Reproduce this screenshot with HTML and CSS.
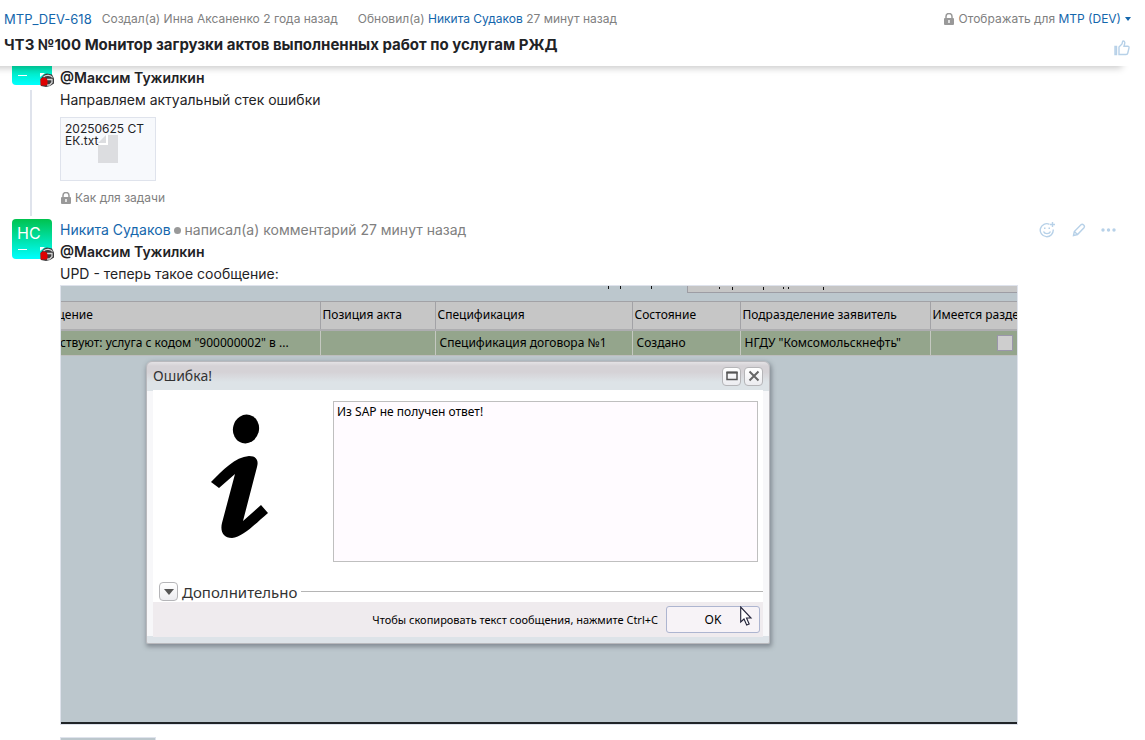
FILE: index.html
```html
<!DOCTYPE html>
<html lang="ru">
<head>
<meta charset="utf-8">
<title>MTP_DEV-618</title>
<link rel="stylesheet" href="styles.css">
</head>
<body>
<svg class="defs" aria-hidden="true">
  <symbol id="lock" viewBox="0 0 10 12"><path d="M2 5V3.500a3 3 0 0 1 6 0V5" fill="none" stroke="#999" stroke-width="1.500"/><path fill="#999" fill-rule="evenodd" d="M1 5h8a1 1 0 0 1 1 1v5a1 1 0 0 1-1 1H1a1 1 0 0 1-1-1V6a1 1 0 0 1 1-1zm3.300 2v3h1.400V7z"/></symbol>
  <symbol id="badge" viewBox="0 0 14 14"><path d="M0 0h5L0 4z" fill="#fff"/><path d="M4 1.500 7 .5l5 1 2 4v5L10 13l-4 1-5-1-.5-7z" fill="#3c3c3e"/><path d="M3.500 4C6 1.800 10.500 1.800 12.500 4.500" fill="none" stroke="#ddd" stroke-width="1.200"/><path d="M7 6.500h5v3L9.500 12H7" fill="none" stroke="#d5d5d5" stroke-width="1.300"/><path d="M.5 6 3 4.500 6 5l1.500 2v4.500L6 12.500H.5z" fill="#e00000"/></symbol>
</svg>
<div class="app">
  <header class="header">
    <div class="meta">
      <a class="issue-id" href="#">MTP_DEV-618</a>
      <span class="created">Создал(а) Инна Аксаненко 2 года назад</span>
      <span class="updated">Обновил(а) <a href="#">Никита Судаков</a> 27 минут назад</span>
      <span class="visibility"><svg class="lock"><use href="#lock"/></svg>Отображать для <a href="#">MTP (DEV)</a><i class="caret"></i></span>
    </div>
    <div class="title-row">
      <h1 class="title">ЧТЗ №100 Монитор загрузки актов выполненных работ по услугам РЖД</h1>
      <button class="icon-button like" aria-label="Нравится"><svg width="16" height="16" viewBox="0 0 16 16"><path d="M1 6.500h1.500v8H1zM5 7l3-3 .7-2.800c1.500-.5 2.500.8 2 2.300L10 6.200h3.700c1 0 1.500.7 1.300 1.600l-1.200 5.200c-.2 1-.8 1.500-1.700 1.500H5z" fill="none" stroke="#b7d1e8" stroke-width="1.400"/></svg></button>
    </div>
  </header>

  <main class="feed">
    <article class="comment first">
      <div class="rail"><div class="avatar"><i class="dash"></i><svg class="badge"><use href="#badge"/></svg></div><i class="thread"></i></div>
      <div class="body">
        <p class="text"><strong>@Максим Тужилкин</strong></p>
        <p class="text">Направляем актуальный стек ошибки</p>
        <a class="file" href="#"><span class="file-name">20250625 СТЕК.txt</span><svg class="file-icon" viewBox="0 0 20 28"><path d="M10 0h10v28H0V10h10z" fill="#dcdde0"/><path d="M8 0v8H0z" fill="#dcdde0"/><path d="M9 0v9H0" fill="none" stroke="#fff" stroke-width="2"/></svg></a>
        <div class="scope"><svg class="lock"><use href="#lock"/></svg>Как для задачи</div>
      </div>
    </article>

    <article class="comment">
      <div class="rail"><div class="avatar">НС<i class="dash"></i><svg class="badge"><use href="#badge"/></svg></div></div>
      <div class="body">
        <div class="head">
          <a href="#">Никита Судаков</a><i class="dot"></i><span>написал(а) комментарий 27 минут назад</span>
          <div class="actions">
            <button class="icon-button" aria-label="Реакция"><svg width="18" height="16" viewBox="0 0 18 16"><g fill="none" stroke="#b7d1e8" stroke-width="1.400"><path d="M10.500 2.300A6.500 6.500 0 1 0 14.200 7.500M4.500 9.500c1.200 2.800 5.800 2.800 7 0M13.500 0v5M11 2.500h5"/></g><path d="M5 5.500h1.500V7H5zM9.500 5.500H11V7H9.500z" fill="#b7d1e8"/></svg></button>
            <button class="icon-button" aria-label="Изменить"><svg width="14" height="14" viewBox="0 0 14 14"><path d="m1.500 12.500.8-4L9 1.800c1.600-1.600 4.400 1 3 2.900L5.500 11.500zM2.300 8.500l3.200 3" fill="none" stroke="#b7d1e8" stroke-width="1.400"/></svg></button>
            <button class="icon-button" aria-label="Ещё"><svg width="16" height="4" viewBox="0 0 16 4"><g fill="#b7d1e8"><circle cx="2" cy="2" r="1.700"/><circle cx="7.500" cy="2" r="1.700"/><circle cx="13" cy="2" r="1.700"/></g></svg></button>
          </div>
        </div>
        <p class="text"><strong>@Максим Тужилкин</strong></p>
        <p class="text">UPD - теперь такое сообщение:</p>

        <section class="shot">
          <div class="shot-top">
            <svg class="marks" viewBox="0 0 50 3"><path d="M1.500 0v3M13.500 0v3M44.500 0v3" stroke="#111"/></svg>
            <div class="field"><svg class="marks wide" viewBox="0 0 110 3"><path d="M.5 0v2M13.500 0v3M44.500 0v3M64.500 0v2M69.500 0v2M104.500 0v3" stroke="#111"/></svg></div>
          </div>
          <table class="grid">
            <colgroup><col class="c1"><col class="c2"><col class="c3"><col class="c4"><col class="c5"><col></colgroup>
            <thead><tr><th class="cut-head">щение</th><th>Позиция акта</th><th>Спецификация</th><th>Состояние</th><th>Подразделение заявитель</th><th>Имеется разде</th></tr></thead>
            <tbody><tr><td class="cut-cell">ствуют: услуга с кодом "900000002" в ...</td><td></td><td>Спецификация договора №1</td><td>Создано</td><td>НГДУ "Комсомольскнефть"</td><td class="check-cell"><input type="checkbox" aria-label="Имеется раздел"></td></tr></tbody>
          </table>

          <div class="dialog" role="dialog" aria-labelledby="dlg-title">
            <div class="dlg-bar">
              <span id="dlg-title">Ошибка!</span>
              <div class="dlg-tools">
                <button class="tool" aria-label="Развернуть"><svg width="12" height="10" viewBox="0 0 12 10"><path d="M1 1.500h10v7H1z" fill="none" stroke="#555" stroke-width="1.500"/><path d="M.5 1.500h11" stroke="#555" stroke-width="2"/></svg></button>
                <button class="tool" aria-label="Закрыть"><svg width="12" height="12" viewBox="0 0 12 12"><path d="m1.500 1.500 9 9m0-9-9 9" stroke="#666" stroke-width="2"/></svg></button>
              </div>
            </div>
            <div class="dlg-main">
              <div class="dlg-content">
                <svg class="info" viewBox="0 0 60 126"><ellipse cx="36" cy="15" rx="13" ry="14.500" fill="#000" transform="rotate(15 36 15)"/><path fill="#000" d="M1 68C13 56 25 43 39 42c7 0 10 4 8 11l-14 54 18-16 7 8c-14 12-25 24-36 25-9 0-12-7-10-15L25 60 9 74z"/></svg>
                <textarea class="message" aria-label="Сообщение" spellcheck="false">Из SAP не получен ответ!</textarea>
              </div>
              <div class="more"><button class="tool" aria-label="Показать дополнительно"><svg width="10" height="6" viewBox="0 0 10 6"><path d="M0 0h10L5 6z" fill="#555"/></svg></button><span>Дополнительно</span><i class="line"></i></div>
              <div class="dlg-foot"><span>Чтобы скопировать текст сообщения, нажмите Ctrl+C</span><button class="ok">OK</button></div>
            </div>
            <svg class="cursor" viewBox="0 0 13 20"><path d="M.7 1v15l3.300-3 2.700 6 2.500-1-2.700-6H11z" fill="#fff" stroke="#222238" stroke-width="1.100"/></svg>
          </div>
        </section>
        <a class="thumb" href="#" aria-label="Вложение"></a>
      </div>
    </article>
  </main>
</div>
</body>
</html>
```

FILE: styles.css
```css
* { box-sizing: border-box; }
body { margin: 0; font-family: Inter, "Noto Sans", sans-serif; font-size: 14px; line-height: 22px; color: #1f2326; background: #fff; }
a { color: #1466ac; text-decoration: none; }
button { font: inherit; padding: 0; border: 0; background: none; cursor: pointer; }
.defs { position: absolute; width: 0; height: 0; }
.app { display: flex; flex-direction: column; height: 100vh; overflow: hidden; }

.header { position: relative; z-index: 2; margin-right: 15px; padding: 8px 0 7px 4px; background: #fff; box-shadow: -8px 2px 7px rgba(0, 0, 0, .22); }
.meta { display: flex; align-items: center; font-size: 12px; color: #808080; }
.issue-id { font-size: 13px; margin-right: 10px; }
.updated { margin-left: 20px; }
.visibility { display: flex; align-items: center; margin-left: auto; white-space: pre; }
.lock { width: 10px; height: 12px; margin-right: 5px; }
.caret { margin-left: 4px; margin-right: -1px; border: 3px solid transparent; border-top: 4px solid #1466ac; border-bottom: 0; }
.title-row { display: flex; justify-content: space-between; align-items: center; height: 29px; }
.title { margin: 0; font-size: 15px; line-height: 28px; font-weight: 700; }
.icon-button { display: flex; align-items: center; justify-content: center; }
.like { padding-top: 6px; }

.feed { flex: 1; min-height: 0; overflow: hidden; padding: 0 15px 0 12px; }
.comment { display: flex; gap: 8px; }
.first { margin-top: -21px; height: 174px; }
.first .body { padding-top: 22px; }
.rail { display: flex; flex-direction: column; flex: none; width: 40px; }
.avatar { position: relative; flex: none; height: 40px; padding: 3px 5px; border-radius: 4px; background: linear-gradient(#00c24e, #0ff); color: #fff; font-size: 16px; }
.dash { position: absolute; left: 6px; bottom: 9px; width: 9px; height: 1px; background: #fff; }
.badge { position: absolute; right: -2px; bottom: -2px; width: 14px; height: 14px; }
.thread { flex: 1; width: 2px; margin: 5px 0 3px 18px; background: #dfe3ec; }
.body { flex: 1; min-width: 0; }
.text { margin: 0; }
.text strong { font-weight: 600; }
.file { position: relative; display: block; width: 96px; height: 64px; margin-top: 6px; padding: 5px 4px; border: 1px solid #dfe3ec; background: #f7f9fc; color: #1f2326; font-size: 12px; line-height: 12px; word-break: break-all; }
.file-name { position: relative; z-index: 1; }
.file-icon { position: absolute; left: 37px; top: 17px; width: 20px; height: 28px; }
.scope { display: flex; align-items: center; margin-top: 6px; padding-left: 1px; font-size: 12px; color: #808080; }
.scope .lock { margin-right: 4px; }
.head { display: flex; align-items: center; height: 22px; color: #808080; }
.dot { width: 7px; height: 7px; margin: 0 4px 0 3px; border-radius: 50%; background: #999; }
.actions { display: flex; align-items: center; gap: 15px; margin-left: auto; padding-right: 13px; }

.shot { position: relative; width: 958px; max-width: 100%; height: 440px; overflow: hidden; border: 1px solid #dfe3ec; background: #bcc7cd; color: #000; font-family: "Noto Sans", sans-serif; font-size: 12px; line-height: 16px; box-shadow: inset 0 -2px #202427; }
.shot-top { display: flex; justify-content: flex-end; height: 15px; }
.marks { width: 50px; height: 3px; margin-right: 30px; }
.field { width: 330px; height: 7px; padding-left: 31px; border: solid #9d9da4; border-width: 0 0 1px 1px; background: #c6c6c6; line-height: 0; }
.wide { width: 110px; }
.grid { width: 100%; table-layout: fixed; border-collapse: collapse; }
.c1 { width: 259px; } .c2 { width: 115px; } .c3 { width: 197px; } .c4 { width: 108px; } .c5 { width: 190px; }
.grid th, .grid td { overflow: hidden; padding: 0 0 0 2px; font-weight: 400; text-align: left; white-space: nowrap; }
.grid th { height: 28px; border-top: 1px solid #a2a2a6; border-right: 1px solid #a2a2a6; border-bottom: 2px solid #adadb0; background: #c6c6c6; }
.grid td { height: 26px; padding-left: 4px; border-right: 1px solid #c4c8c0; border-bottom: 1px solid #bdbdbd; background: #94a58c; }
.grid th:last-child, .grid td:last-child { border-right: 0; }
.grid .cut-head { padding: 0; text-indent: -7px; }
.grid .cut-cell { padding: 0; text-indent: -1px; }
.grid .check-cell { padding-right: 4px; text-align: right; }
.check-cell input { appearance: none; display: block; width: 16px; height: 16px; margin: 0 0 0 auto; border: 1px solid #9a96aa; background: #cecece; }

.dialog { position: absolute; left: 85px; top: 75px; width: 624px; height: 283px; padding: 0 6px 6px; border: 1px solid #b9b9bd; border-radius: 6px 6px 2px 2px; background: linear-gradient(#e4e2e5 0, #d5d2d6 4px, #d5d2d6 10px, #dde3e7 20px, #dde3e7 29px, #f7f7f9 29px, #f7f7f9 274px, #dde3e8 274px); box-shadow: 1px 2px 4px 1px rgba(80, 85, 95, .5); }
.dlg-bar { display: flex; align-items: center; justify-content: space-between; height: 28px; font-size: 14px; color: #333; }
.dlg-tools { display: flex; gap: 3px; }
.tool { display: flex; flex: none; align-items: center; justify-content: center; width: 19px; height: 19px; border: 1px solid #b5b5b8; border-radius: 4px; background: linear-gradient(#fff, #ececf0); }
.dlg-main { display: flex; flex-direction: column; height: 247px; background: #fff; }
.dlg-content { display: flex; gap: 63px; padding: 11px 5px 0 57px; }
.info { flex: none; width: 60px; height: 126px; margin-top: 13px; }
.message { flex: 1; height: 161px; padding: 2px 3px; border: 1px solid #bfbfbf; outline: 0; resize: none; background: #fffbff; font: inherit; color: #000; }
.more { display: flex; align-items: center; gap: 4px; margin-top: auto; padding: 0 0 1px 6px; font-size: 15px; color: #333; }
.line { flex: 1; height: 1px; background: #b5b5b5; }
.dlg-foot { display: flex; align-items: center; justify-content: flex-end; gap: 8px; height: 35px; padding-right: 3px; background: #efebee; font-size: 11px; }
.ok { width: 94px; height: 27px; border: 1px solid #adb5d0; border-radius: 3px; background: #f7f3f7; font-size: 12px; }
.cursor { position: absolute; left: 593px; top: 244px; width: 13px; height: 20px; }
.thumb { display: block; width: 96px; height: 64px; margin-top: 12px; border: 1px solid #dfe3ec; background: #bcc7cd; }
```
